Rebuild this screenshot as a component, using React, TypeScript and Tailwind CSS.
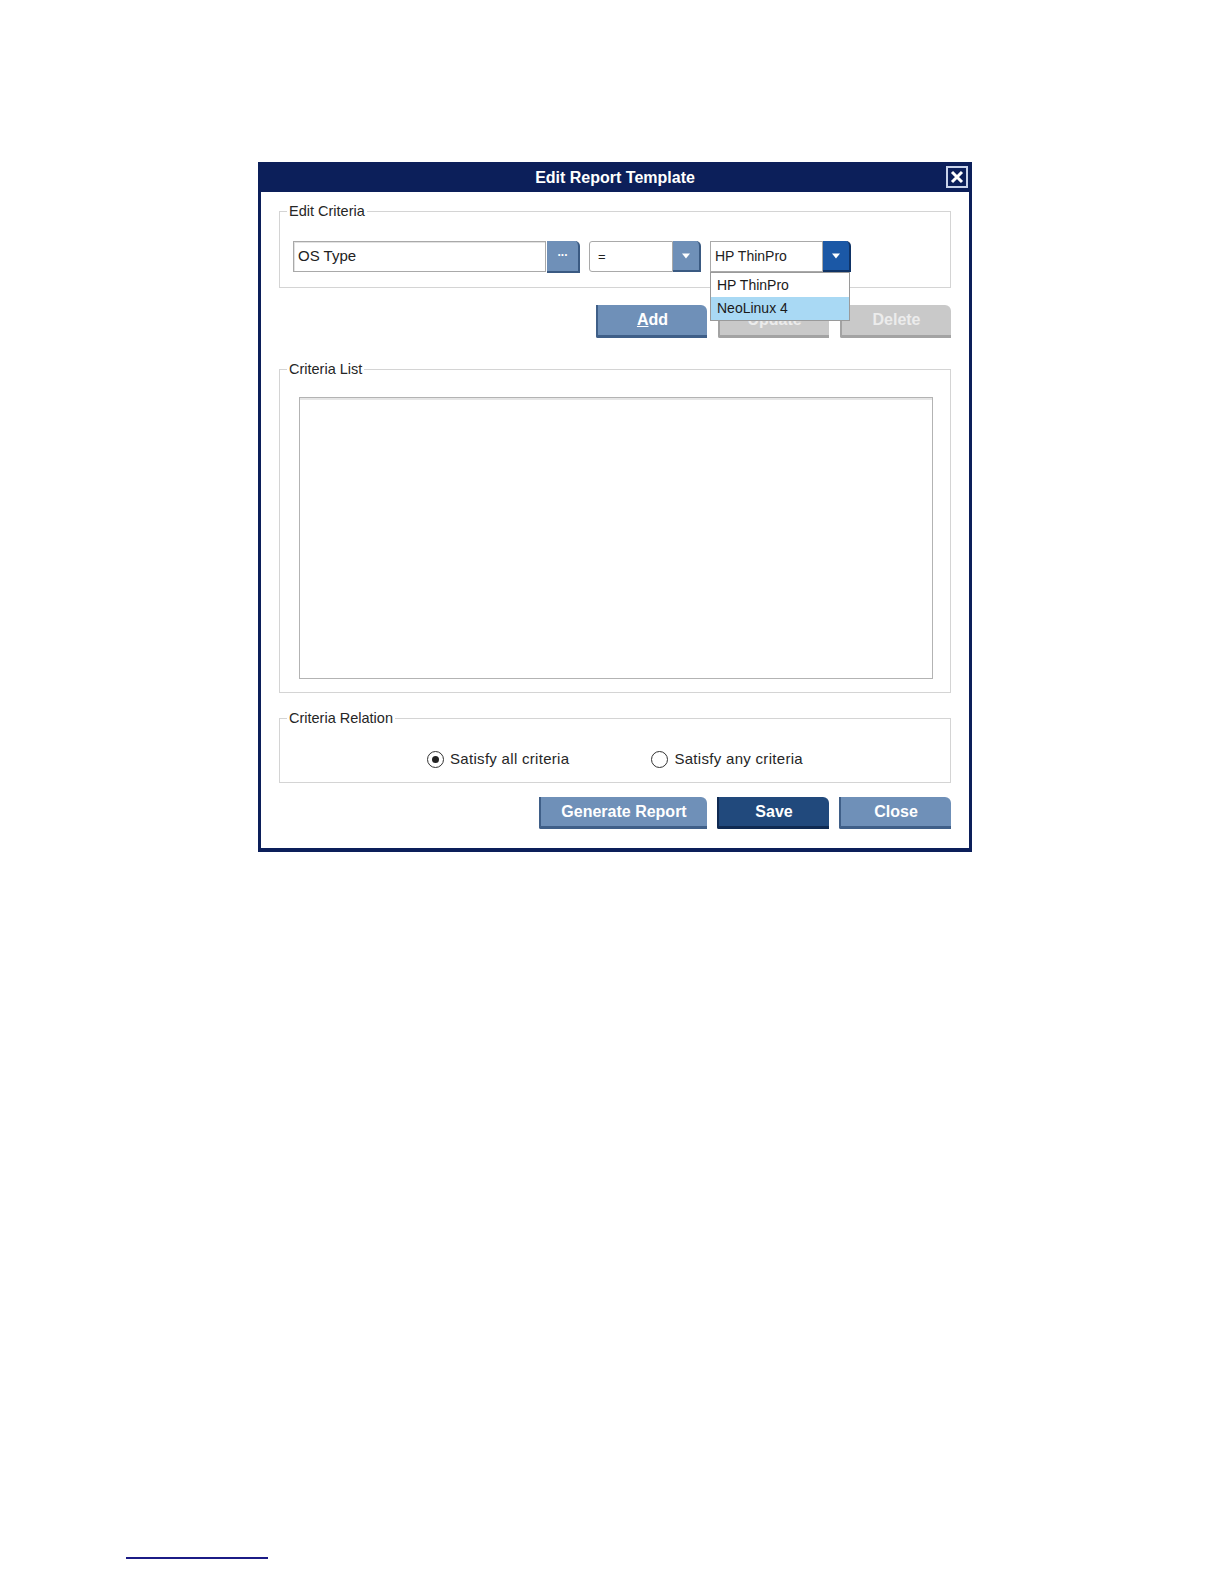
import React from 'react';

// little white arrow used by the combo boxes
const Arrow = () => (
  <svg width="10" height="6" viewBox="0 0 10 6">
    <path d="M1 0.5 L9 0.5 L5 5.5 Z" fill="#ffffff" />
  </svg>
);

const BigButton = ({
  label,
  kind,
  width,
  height = 'h-[33px]',
}: {
  label: React.ReactNode;
  kind: 'blue' | 'navy' | 'off';
  width: string;
  height?: string;
}) => {
  const look =
    kind === 'navy'
      ? 'bg-[#21497c] border-[#0f2a52] text-white'
      : kind === 'off'
      ? 'bg-[#c9c9c9] border-[#a3a3a3] text-[#ececec]'
      : 'bg-[#6f90b8] border-[#3f5f88] text-white';
  return (
    <button
      className={`${width} ${height} ${look} border-l-2 border-b-[3px] rounded-tr-[6px] rounded-bl-[2px] text-[16px] font-bold flex items-center justify-center`}
    >
      {label}
    </button>
  );
};

// fieldset with a legend; padding goes on the inner div so the legend stays put
const Group = ({
  title,
  className,
  inner,
  children,
}: {
  title: string;
  className: string;
  inner: string;
  children: React.ReactNode;
}) => (
  <fieldset className={`border border-[#d4d4d4] ${className}`}>
    <legend className="ml-[7px] px-[2px] text-[14.5px] leading-[16px] text-[#262626]">{title}</legend>
    <div className={inner}>{children}</div>
  </fieldset>
);

const Radio = ({ checked, label }: { checked: boolean; label: string }) => (
  <label className="flex items-center gap-[6px] text-[15px] tracking-[0.3px] text-[#262626]">
    <span className="w-[17px] h-[17px] rounded-full border-[1.5px] border-[#333] bg-white flex items-center justify-center">
      {checked && <span className="w-[7px] h-[7px] rounded-full bg-[#222]" />}
    </span>
    {label}
  </label>
);

export default function App() {
  return (
    <div className="bg-white pt-[162px] font-['Liberation_Sans',Arial,sans-serif]">
      <div className="ml-[258px] w-[714px] h-[690px] bg-[#0c1f5a] px-[3px] pb-[4px] flex flex-col">
        <div className="h-[30px] flex items-center relative">
          <div className="flex-1 text-center text-white font-bold text-[16px] pt-[2px]">
            Edit Report Template
          </div>
          <div className="absolute right-[1px] top-[4px] w-[22px] h-[22px] border-2 border-[#c9d3ea] bg-[#0c1f5a] flex items-center justify-center">
            <svg width="14" height="14" viewBox="0 0 14 14">
              <path d="M2 2 L12 12 M12 2 L2 12" stroke="#ffffff" strokeWidth="3" />
            </svg>
          </div>
        </div>

        <div className="flex-1 bg-white px-[18px] pt-[11px] flex flex-col">
          <Group title="Edit Criteria" className="h-[85px]" inner="pl-[13px] pt-[22px]">
            <div className="flex items-start">
              <div className="w-[253px] h-[31px] border border-[#a9a9a9] shadow-[inset_1px_1px_0_#e2e2e2] flex items-center pl-[4px] text-[15px] text-[#222]">
                OS Type
              </div>
              <button className="ml-[1px] w-[33px] h-[32px] bg-[#6f90b8] border-r-2 border-b-2 border-[#3a5a82] rounded-tr-[5px] flex items-start justify-center text-white text-[12px] font-bold leading-[22px]">
                ...
              </button>
              <div className="ml-[9px] flex">
                <div className="w-[84px] h-[31px] border border-[#a9a9a9] rounded-l-[3px] flex items-center pl-[8px] text-[13px] text-[#222]">
                  =
                </div>
                <div className="w-[28px] h-[31px] bg-[#6f90b8] border-r-2 border-b-2 border-[#3a5a82] rounded-tr-[5px] flex items-center justify-center">
                  <Arrow />
                </div>
              </div>
              <div className="ml-[9px] relative flex">
                <div className="w-[113px] h-[31px] border border-[#a9a9a9] flex items-center pl-[4px] text-[14px] text-[#222]">
                  HP ThinPro
                </div>
                <div className="w-[28px] h-[31px] bg-[#1b58a6] border-r-2 border-b-2 border-[#0f3366] rounded-tr-[5px] flex items-center justify-center">
                  <Arrow />
                </div>
                <div className="absolute left-0 top-[31px] w-[140px] bg-white border border-[#9a9a9a] z-10 text-[14px] text-[#1a1a1a]">
                  <div className="h-[24px] flex items-center pl-[6px]">HP ThinPro</div>
                  <div className="h-[23px] flex items-center pl-[6px] bg-[#a9d9f4]">NeoLinux 4</div>
                </div>
              </div>
            </div>
          </Group>

          <div className="mt-[17px] flex justify-end gap-[11px]">
            <BigButton
              label={<span><span className="underline">A</span>dd</span>}
              kind="blue"
              width="w-[111px]"
            />
            <BigButton label="Update" kind="off" width="w-[111px]" />
            <BigButton label="Delete" kind="off" width="w-[111px]" />
          </div>

          <Group title="Criteria List" className="mt-[23px] h-[332px]" inner="pl-[19px] pr-[17px] pt-[20px]">
            <div className="h-[282px] border border-[#b3b3b3] shadow-[inset_0_2px_0_#e6e6e6] bg-white" />
          </Group>

          <Group title="Criteria Relation" className="mt-[17px] h-[73px]" inner="flex justify-center gap-[82px] pt-[22px]">
            <Radio checked label="Satisfy all criteria" />
            <Radio checked={false} label="Satisfy any criteria" />
          </Group>

          <div className="mt-[14px] flex justify-end gap-[10px]">
            <BigButton label="Generate Report" kind="blue" width="w-[168px]" height="h-[32px]" />
            <BigButton label="Save" kind="navy" width="w-[112px]" height="h-[32px]" />
            <BigButton label="Close" kind="blue" width="w-[112px]" height="h-[32px]" />
          </div>
        </div>
      </div>

      <div className="ml-[126px] mt-[705px] w-[142px] h-[2px] bg-[#1b1b86]" />
    </div>
  );
}
